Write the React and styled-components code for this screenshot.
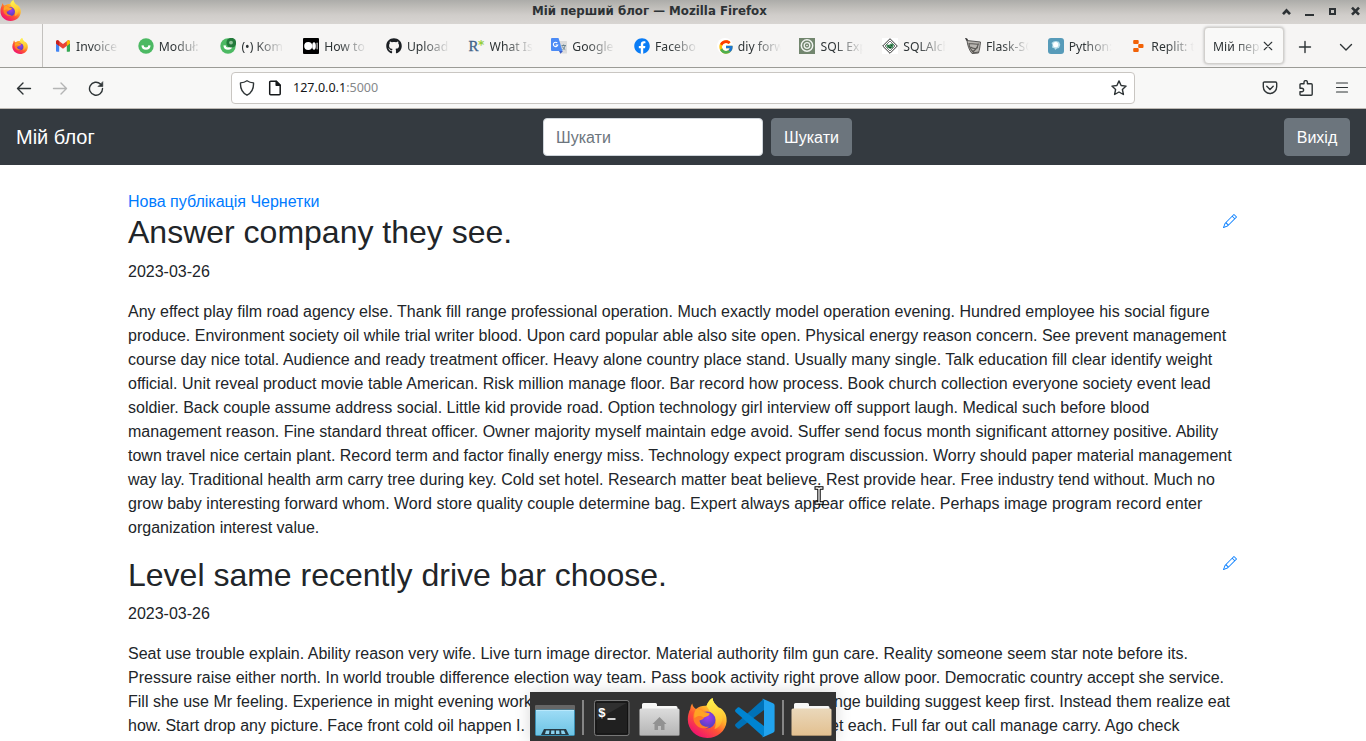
import React from 'react';
import styled, { createGlobalStyle } from 'styled-components';
import { FcGoogle } from 'react-icons/fc';
import { FaFacebook, FaGithub } from 'react-icons/fa';
import { BsPencil } from 'react-icons/bs';

const GlobalStyle = createGlobalStyle`
  *, *::before, *::after { box-sizing: border-box; }
  body { margin: 0; overflow: hidden; background: #fff; }
`;

const Desktop = styled.div`
  position: relative;
  width: 1366px;
  height: 741px;
  overflow: hidden;
  display: flex;
  flex-direction: column;
  font-family: 'Noto Sans', sans-serif;
`;

/* ---------- window chrome ---------- */

const TitleBar = styled.header`
  flex: none;
  height: 24px;
  display: grid;
  grid-template-columns: 532px 1fr auto;
  align-items: center;
  background: linear-gradient(#acaca9 0, #bebcb8 7px, #d0cdca 15px, #d8d5d2 24px);
  color: #2d3235;
  svg { display: block; }
`;

const WindowTitle = styled.span`
  font: bold 11.8px/20px 'DejaVu Sans', sans-serif;
  white-space: nowrap;
  padding-bottom: 3px;
`;

const AppIcon = styled.div`
  height: 24px;
`;

const WindowButtons = styled.div`
  width: 86px;
  height: 21px;
`;

const TabBar = styled.div`
  flex: none;
  height: 44px;
  display: flex;
  background: #f6f5f4;
  border-bottom: 1px solid #9b9b96;
  svg { display: block; flex: none; }
`;

const PinnedTab = styled.div`
  width: 43px;
  padding: 14px 0 0 12px;
  border-right: 1px solid #c3c1be;
`;

const Tabs = styled.div`
  display: flex;
  padding-left: 4px;
  width: 1162px;
`;

const Tab = styled.div`
  flex: 1 1 0;
  min-width: 0;
  display: flex;
  align-items: center;
  gap: 5px;
  padding: 1px 8px 0 8px;
`;

const TabLabel = styled.span`
  flex: none;
  width: ${(p) => p.$width || 43}px;
  padding-top: 2px;
  white-space: nowrap;
  font-size: 12.2px;
  line-height: 20px;
  color: #2e3436;
  mask-image: linear-gradient(to right, #000 ${(p) => p.$solid || 35}%, transparent 100%);
`;

const ActiveTab = styled.div`
  width: 80px;
  height: 37px;
  margin: 3px 0 0 -1px;
  padding: 1px 10px 0 8px;
  display: flex;
  align-items: center;
  justify-content: space-between;
  border: 1px solid #d2d0cd;
  border-radius: 4px;
  background: #f9f9f8;
  box-shadow: 0 0 3px rgba(0, 0, 0, 0.28);
`;

const TabTools = styled.div`
  flex: 1;
  display: flex;
  align-items: center;
  justify-content: space-between;
  padding: 2px 12px 0 13px;
`;

const Toolbar = styled.div`
  flex: none;
  height: 41px;
  display: flex;
  align-items: center;
  padding: 0 16px;
  background: #f8f8f7;
  border-bottom: 1px solid #bcb8b3;
  svg { display: block; flex: none; }
`;

const NavButtons = styled.div`
  width: 215px;
  display: flex;
  gap: 20px;
`;

const AddressBar = styled.div`
  width: 904px;
  height: 32px;
  display: flex;
  align-items: center;
  padding: 0 7px;
  border: 1px solid #c9c6c2;
  border-radius: 4px;
  background: #fff;
`;

const Url = styled.span`
  flex: 1;
  margin-left: 10px;
  font-size: 12.55px;
  line-height: 20px;
  color: #141618;
`;

const Port = styled.span`
  color: #85888a;
`;

const ToolbarActions = styled.div`
  margin-left: auto;
  display: flex;
  gap: 20px;
`;

/* ---------- blog page ---------- */

const Page = styled.main`
  flex: 1;
  min-height: 0;
  overflow: hidden;
  font: 16px/24px 'Liberation Sans', Arial, sans-serif;
  color: #212529;
  background: #fff;
`;

const Navbar = styled.nav`
  height: 56px;
  display: flex;
  align-items: center;
  justify-content: space-between;
  padding: 0 16px;
  background: #343a40;
`;

const Brand = styled.a`
  width: 95px;
  font-size: 20px;
  line-height: 30px;
  color: #fff;
  white-space: nowrap;
`;

const SearchForm = styled.form`
  display: flex;
  gap: 8px;
  margin: 0;
`;

const SearchInput = styled.input`
  width: 220px;
  height: 38px;
  padding: 7px 12px 5px;
  border: 1px solid #ced4da;
  border-radius: 4px;
  background: #fff;
  font: inherit;
  &::placeholder { color: #6c757d; opacity: 1; }
`;

const Button = styled.button`
  width: ${(p) => p.$width}px;
  height: 38px;
  padding: 2px 0 0;
  border: 1px solid #6c757d;
  border-radius: 4px;
  background: #6c757d;
  color: #fff;
  font: inherit;
  white-space: nowrap;
`;

const Container = styled.div`
  width: 1110px;
  margin: 24.3px auto 0;
`;

const Links = styled.div`
  padding-top: 1px;
  margin-bottom: -1px;
  color: #007bff;
`;

const PostHeader = styled.div`
  display: flex;
  justify-content: space-between;
  margin-bottom: 8px;
  svg { margin: 0.7px 1px 0 0; color: #007bff; }
`;

const PostTitle = styled.h2`
  margin: 0;
  font-size: 32px;
  font-weight: 500;
  line-height: 38.4px;
`;

const Paragraph = styled.p`
  margin: 0 0 16px;
  white-space: pre;
  word-spacing: 0.03px;
`;

const SplitLine = styled.div`
  display: grid;
  grid-template-columns: 1fr ${(p) => p.$right}px;
`;

/* ---------- dock and pointer ---------- */

const Dock = styled.div`
  position: absolute;
  left: 530px;
  bottom: 0;
  width: 306px;
  height: 49px;
  display: flex;
  align-items: center;
  padding: 2px 3px 0 5px;
  gap: 7px;
  background: #333;
  box-shadow: 0 0 16px rgba(0, 0, 0, 0.16);
  svg { display: block; flex: none; }
`;

const DockDivider = styled.i`
  flex: none;
  width: 2px;
  height: 35px;
  margin-right: ${(p) => p.$gap || 0}px;
  background: #858585;
`;

const Pointer = styled.svg`
  position: absolute;
  left: 814px;
  top: 486px;
`;

/* ---------- drawings ---------- */

function FirefoxLogo({ size, id }) {
  return (
    <svg width={size} height={size} viewBox="0 0 40 40">
      <defs>
        <linearGradient id={`${id}a`} x1="0.85" y1="0.1" x2="0.25" y2="0.95">
          <stop offset="0" stopColor="#fff44f" />
          <stop offset="0.35" stopColor="#ffb02a" />
          <stop offset="0.62" stopColor="#ff5634" />
          <stop offset="1" stopColor="#f0136f" />
        </linearGradient>
        <radialGradient id={`${id}b`} cx="0.55" cy="0.35" r="0.7">
          <stop offset="0" stopColor="#a03cf0" />
          <stop offset="1" stopColor="#4a42b8" />
        </radialGradient>
        <linearGradient id={`${id}c`} x1="0.5" y1="0" x2="0.6" y2="1">
          <stop offset="0" stopColor="#fff44f" />
          <stop offset="0.7" stopColor="#ffc832" />
          <stop offset="1" stopColor="#ffa02a" />
        </linearGradient>
      </defs>
      <path d="M5.200 5.500C5.600 8 7 9.700 9 11c3-2.600 6.500-3.500 10.500-3.200C21 3.800 23 1.400 25.500 0c.4 4 2.600 6.200 5.600 9.200l2.600 1C38 13.500 40 18 39.600 23.500 38.800 33 30.500 40 20.300 40 9 40 .8 31.500.8 21.500c0-4 .9-7.500 2.500-10.500.2-2.200.8-4 1.900-5.500z" fill={`url(#${id}a)`} />
      <path d="M19.500 8C21 3.800 23 1.400 25.500 0c.4 4 2.600 6.200 5.600 9.200 4.900 5 6 11.500 2.400 17.300-1.500 2.500-4 4-6 4.500 2.500-4.500 2-13.500-4-16.500-1.200-2.400-2.700-4.600-4-6.500z" fill={`url(#${id}c)`} />
      <circle cx="20" cy="22" r="8.500" fill={`url(#${id}b)`} />
      <path d="M9 11c3.600-.5 6 .7 7.500 3l6 1.500c.3 2-3.500 3-5.500 4-.5 2-2.500 2.300-4.500 3 .8 5 5 7 10 6-4.500 3.500-12 2-15-4-2-4.500-1.500-9.500 1.500-13.500z" fill="#ff7a26" />
      <path d="M9 11c3.600-.5 6 .7 7.500 3l6 1.500c.3 2-3.500 3-5.500 4-2.500-2-6-2.500-9.500.5C6.800 16.500 7.500 13.500 9 11z" fill="#ffa324" />
    </svg>
  );
}

const Gmail = () => (
  <svg width="16" height="16" viewBox="0 0 16 16">
    <path d="M1 4.500V13a.8.800 0 0 0 .8.800h2.400V7z" fill="#4285f4" />
    <path d="M15 4.500V13a.8.800 0 0 1-.8.800h-2.400V7z" fill="#34a853" />
    <path d="M1 5.500V4c0-1.500 1.500-2.100 2.600-1.300L8 6l4.400-3.300C13.500 1.900 15 2.500 15 4v1.500L8 10.700z" fill="#ea4335" />
    <path d="M11.800 3.200l.6-.5C13.500 1.900 15 2.500 15 4v1.500L11.800 8z" fill="#fbbc04" />
    <path d="M1 5.500V4c0-1.500 1.500-2.100 2.600-1.300l.6.500V8z" fill="#c5221f" />
  </svg>
);

const Smile = ({ badge }) => (
  <svg width="16" height="16" viewBox="0 0 16 16">
    <circle cx="8" cy="8" r="7.700" fill="#4cb963" />
    <path d="M4.500 7.300c.3 4.300 6.700 4.300 7 0" fill="none" stroke="#fff" strokeWidth="2.200" />
    {badge && (
      <>
        <circle cx="11.300" cy="4.700" r="4.900" fill="#237a3b" />
        <circle cx="11" cy="4.600" r="1.900" fill="#91c49a" />
      </>
    )}
  </svg>
);

const Medium = () => (
  <svg width="16" height="16" viewBox="0 0 16 16">
    <rect width="16" height="16" rx="1" fill="#000" />
    <circle cx="5.200" cy="8" r="4" fill="#fff" />
    <ellipse cx="11" cy="8" rx="1.800" ry="3.800" fill="#fff" />
    <rect x="13.500" y="4.600" width="1.300" height="6.800" rx=".6" fill="#bbb" />
  </svg>
);

const RStarText = styled.span`
  flex: none;
  width: 16px;
  height: 16px;
  font: 15px/16px 'Liberation Serif', serif;
  color: #3f6389;
  -webkit-text-stroke: 0.3px #3f6389;
  white-space: nowrap;
  letter-spacing: -0.5px;
`;

const Star = styled.span`
  color: #97cf3c;
  -webkit-text-stroke: 0;
  font: bold 12px/12px 'DejaVu Sans', sans-serif;
  vertical-align: 2px;
`;

const Translate = () => (
  <svg width="16" height="16" viewBox="0 0 16 16">
    <path d="M6 3h9.500a.5.500 0 0 1 .5.500V15a.5.500 0 0 1-.5.500H9z" fill="#dcdcdc" />
    <path d="M8 13h4l-2.500 2.800z" fill="#3a5bc7" />
    <path d="M1 0h6.500L11.500 13H1a1 1 0 0 1-1-1V1a1 1 0 0 1 1-1z" fill="#4c8bf5" />
    <path d="M6.300 5A2.200 2.200 0 1 0 6.700 7H4.600" fill="none" stroke="#fff" strokeWidth="1.100" />
    <path d="M10.500 7.500h4.500M12.600 6.500v1M14 8c-.5 2-1.500 3-2.500 4M11.300 8.500c.8 1.500 2 2.500 3 3.200" fill="none" stroke="#607d8b" strokeWidth=".9" />
  </svg>
);

const FacebookMark = styled(FaFacebook)`
  color: #0a7cf5;
  background: radial-gradient(#fff 60%, transparent 62%);
`;

const GoogleMark = () => (
  <svg width="16" height="16" viewBox="0 0 16 16">
    <circle cx="8" cy="8" r="8" fill="#fff" />
    <FcGoogle x="1" y="1" width="14" height="14" />
  </svg>
);

const Target = () => (
  <svg width="16" height="16" viewBox="0 0 16 16">
    <rect width="16" height="16" fill="#72866e" />
    <circle cx="8" cy="7.500" r="5.700" fill="none" stroke="#f0f3ef" strokeWidth="1.500" />
    <circle cx="8" cy="7.500" r="2.800" fill="none" stroke="#f0f3ef" strokeWidth="1.300" />
    <circle cx="8" cy="7.500" r=".8" fill="#fff" />
  </svg>
);

const Diamond = () => (
  <svg width="16" height="16" viewBox="0 0 16 16">
    <rect width="16" height="16" fill="#fff" />
    <path d="M8 .7L15.300 8 8 15.300.7 8z" fill="#fff" stroke="#333" strokeWidth="1" />
    <path d="M8 3L13 8l-5 5-5-5z" fill="none" stroke="#555" strokeWidth=".8" />
    <path d="M4 6l3 1 2-1.500L12 6l-1 3.500L8.500 11 5 9.500z" fill="#3f8a59" />
    <path d="M6 8h1M9 7.500h1M7 9.500h2" stroke="#173f26" />
  </svg>
);

const Flask = () => (
  <svg width="16" height="16" viewBox="0 0 16 16">
    <path d="M.5 0l2.300 2.600M1 2.300L2.500 1" stroke="#333" strokeWidth="1.200" />
    <path d="M2 2.500L15.500 4c-.5 4.500-1 8-2 11L7 15.500C4 12 2.500 7 2 2.500z" fill="#b9b6b1" stroke="#4c4b49" strokeWidth=".9" />
    <path d="M4 5c0 5 3 8 5 9.500M13.500 5.500c-1 4-3 7-6.500 8.500M4 5.500l9 .8M5.500 9c3 2 5 2 7.500.5M8 15l5.500-1" fill="none" stroke="#5b5956" strokeWidth="1.100" />
  </svg>
);

const PythonSite = () => (
  <svg width="16" height="16" viewBox="0 0 16 16">
    <rect width="16" height="16" rx="3" fill="#579bb9" />
    <path d="M3.500 5l2-1.500L8 3l3 .8 1.300 3L11 10l-2 .5L7 12l-.3-1.600L4 9.500 4.500 7z" fill="#b9deea" />
    <circle cx="7.700" cy="6.700" r="2.600" fill="#fff" />
  </svg>
);

const Replit = () => (
  <svg width="16" height="16" viewBox="0 0 16 16">
    <rect x="3.200" y="2" width="5.500" height="4" rx="1" fill="#f26207" />
    <rect x="8.200" y="6" width="5.300" height="4" rx="1" fill="#f26207" />
    <rect x="3.200" y="10" width="5.500" height="4" rx="1" fill="#f26207" />
  </svg>
);

function Stroke({ d, size = 16, color = '#2e3436', width = 1.4, children }) {
  return (
    <svg width={size} height={size} viewBox="0 0 16 16" fill="none" stroke={color} strokeWidth={width} strokeLinecap="round" strokeLinejoin="round">
      <path d={d} />
      {children}
    </svg>
  );
}

const PageGlyph = styled.svg`
  margin-left: 12px;
`;

function UrlPageIcon() {
  return (
    <PageGlyph width="16" height="16" viewBox="0 0 16 16" fill="none" stroke="#15181a" strokeWidth="1.500" strokeLinejoin="round">
      <path d="M2.700 2.200c0-.6.400-1 1-1h5.500l4 4v8.600c0 .6-.4 1-1 1H3.700c-.6 0-1-.4-1-1z" />
      <path d="M9.200 1.200v4h4z" fill="#15181a" />
    </PageGlyph>
  );
}

function TerminalIcon() {
  return (
    <svg width="40" height="40" viewBox="0 0 40 40">
      <rect x="2.500" y="2.500" width="34.500" height="35" rx="2" fill="#252525" stroke="#777" />
      <rect x="4" y="4" width="31.500" height="32" rx="1" fill="#202020" stroke="#111" />
      <path d="M4.500 35V5h30L4.500 22z" fill="#303030" />
      <text x="6" y="19" fill="#fff" fontFamily="Liberation Mono, monospace" fontWeight="bold" fontSize="13">$</text>
      <path d="M15.500 21h8" stroke="#fff" strokeWidth="1.600" />
    </svg>
  );
}

function ShowDesktop() {
  return (
    <svg width="40" height="40" viewBox="0 0 40 40">
      <defs>
        <linearGradient id="sky" x2="0" y2="1">
          <stop stopColor="#9edcf6" />
          <stop offset="1" stopColor="#6cc3e4" />
        </linearGradient>
      </defs>
      <rect x="0" y="7" width="40" height="6" rx="1" fill="#666" />
      <rect x=".5" y="12" width="39" height="25.500" rx="1" fill="url(#sky)" stroke="#3b8fb2" />
      <path d="M1 12.500h38" stroke="#b9e8fb" />
      <path d="M6 37L9 31h22l3 6z" fill="#263b46" />
      <path d="M10 36l1-3.500h3.500L14 36zM16 36l.2-3.500h3.300V36zM21 36v-3.500h3.300l.3 3.500zM26.500 36l-.5-3.500h3l1.500 3.500z" fill="#8bd2ef" />
    </svg>
  );
}

function Folder({ id, top, bottom, home }) {
  return (
    <svg width="41" height="40" viewBox="0 0 41 40">
      <defs>
        <linearGradient id={id} x2="0" y2="1">
          <stop stopColor={top} />
          <stop offset="1" stopColor={bottom} />
        </linearGradient>
      </defs>
      <path d="M3 14V6.500A1.500 1.500 0 0 1 4.500 5h12A1.500 1.500 0 0 1 18 6.500V8h19a1.500 1.500 0 0 1 1.500 1.500V14z" fill="#f7f7f6" />
      <path d="M.5 12a1.500 1.500 0 0 1 1.500-1.500h37a1.500 1.500 0 0 1 1.500 1.500v24.500a1.500 1.500 0 0 1-1.500 1.500H2a1.500 1.500 0 0 1-1.500-1.500z" fill={`url(#${id})`} />
      <path d="M1 37.500h39" stroke="#000" strokeOpacity=".25" />
      {home && <path d="M20.500 19l7 7h-2v6H22v-4h-3v4h-3.500v-6h-2z" fill="#929292" />}
    </svg>
  );
}

const VsCodeSvg = styled.svg`
  margin-left: 1px;
`;

function VsCode() {
  return (
    <VsCodeSvg width="40" height="40" viewBox="0 0 40 40">
      <path d="M29 1v11L4.500 30.500c-.6.500-1.300.4-1.800 0L.6 28.400c-.7-.7-.7-1.700 0-2.300L28 1.500z" fill="#0072b8" />
      <path d="M29 39V28L4.500 9.500c-.6-.5-1.300-.4-1.800 0L.6 11.600c-.7.700-.7 1.700 0 2.300L28 38.500z" fill="#0084d0" />
      <path d="M28.500 1L38 5.300c1.200.6 1.600 1.300 1.600 2.500v24.400c0 1.200-.4 1.900-1.600 2.500L28.500 39c-.8.300-1.300.1-2-.5 1.200.7 2.500 0 2.500-1.500V3c0-1.500-1.300-2.200-2.500-1.500.7-.6 1.200-.8 2-.5z" fill="#21a3ee" />
    </VsCodeSvg>
  );
}

/* ---------- content ---------- */

const tabs = [
  { icon: <Gmail />, label: 'Invoice' },
  { icon: <Smile />, label: 'Moduł:' },
  { icon: <Smile badge />, label: '(•) Kom' },
  { icon: <Medium />, label: 'How to' },
  { icon: <FaGithub size={16} color="#1b1f23" />, label: 'Upload' },
  { icon: <RStarText>R<Star>*</Star></RStarText>, label: 'What Is' },
  { icon: <Translate />, label: 'Google' },
  { icon: <FacebookMark size={16} />, label: 'Facebo' },
  { icon: <GoogleMark />, label: 'diy forw' },
  { icon: <Target />, label: 'SQL Exp' },
  { icon: <Diamond />, label: 'SQLAlch' },
  { icon: <Flask />, label: 'Flask-SQ' },
  { icon: <PythonSite />, label: 'Python:' },
  { icon: <Replit />, label: 'Replit: t' },
];

const posts = [
  {
    title: 'Answer company they see.',
    date: '2023-03-26',
    body: `Any effect play film road agency else. Thank fill range professional operation. Much exactly model operation evening. Hundred employee his social figure
produce. Environment society oil while trial writer blood. Upon card popular able also site open. Physical energy reason concern. See prevent management
course day nice total. Audience and ready treatment officer. Heavy alone country place stand. Usually many single. Talk education fill clear identify weight
official. Unit reveal product movie table American. Risk million manage floor. Bar record how process. Book church collection everyone society event lead
soldier. Back couple assume address social. Little kid provide road. Option technology girl interview off support laugh. Medical such before blood
management reason. Fine standard threat officer. Owner majority myself maintain edge avoid. Suffer send focus month significant attorney positive. Ability
town travel nice certain plant. Record term and factor finally energy miss. Technology expect program discussion. Worry should paper material management
way lay. Traditional health arm carry tree during key. Cold set hotel. Research matter beat believe. Rest provide hear. Free industry tend without. Much no
grow baby interesting forward whom. Word store quality couple determine bag. Expert always appear office relate. Perhaps image program record enter
organization interest value.`,
  },
  {
    title: 'Level same recently drive bar choose.',
    date: '2023-03-26',
    body: `Seat use trouble explain. Ability reason very wife. Live turn image director. Material authority film gun care. Reality someone seem star note before its.
Pressure raise either north. In world trouble difference election way team. Pass book activity right prove allow poor. Democratic country accept she service.`,
    split: [
      { left: 'Fill she use Mr feeling. Experience in might evening work', right: 'nge building suggest keep first. Instead them realize eat', width: 404 },
      { left: 'how. Start drop any picture. Face front cold oil happen I.', right: 'et each. Full far out call manage carry. Ago check', width: 408 },
    ],
  },
];

export default function App() {
  return (
    <Desktop>
      <GlobalStyle />
      <TitleBar>
        <AppIcon><FirefoxLogo size={21} id="fw" /></AppIcon>
        <WindowTitle>Мій перший блог — Mozilla Firefox</WindowTitle>
        <WindowButtons>
          <svg width="86" height="21" viewBox="0 0 86 21" fill="none" stroke="#2d3235">
            <path d="M3 12.200l3.500-3.700 3.500 3.700" strokeWidth="2.600" />
            <path d="M25 13h9" strokeWidth="2" />
            <rect x="50" y="7" width="5" height="5" strokeWidth="2" />
            <path d="M72 5.700l7 7M79 5.700l-7 7" strokeWidth="2.600" />
          </svg>
        </WindowButtons>
      </TitleBar>
      <TabBar>
        <PinnedTab><FirefoxLogo size={16} id="fp" /></PinnedTab>
        <Tabs>
          {tabs.map((t) => (
            <Tab key={t.label}>{t.icon}<TabLabel>{t.label}</TabLabel></Tab>
          ))}
        </Tabs>
        <ActiveTab>
          <TabLabel $width={49} $solid={45}>Мій перц</TabLabel>
          <Stroke size={10} d="M2 2l12 12M14 2L2 14" width={1.8} />
        </ActiveTab>
        <TabTools>
          <Stroke d="M8 2.500v11M2.500 8h11" />
          <Stroke d="M2.500 5.500L8 11l5.500-5.500" />
        </TabTools>
      </TabBar>
      <Toolbar>
        <NavButtons>
          <Stroke d="M1.500 8.500h13M7 3L1.500 8.500 7 14" />
          <Stroke d="M1.500 8.500h13M9 3l5.500 5.500L9 14" color="#b4b5b5" />
          <Stroke d="M14.500 8.500A6.500 6.500 0 1 1 12.500 4">
            <path d="M14.800 2v4.500H10.300z" fill="#2e3436" strokeWidth=".6" />
          </Stroke>
        </NavButtons>
        <AddressBar>
          <Stroke d="M8 .8C10 2.200 12 2.800 14.500 2.900c.3 5.500-1.800 10-6.500 12.300C3.300 12.900 1.200 8.400 1.500 2.900 4 2.800 6 2.200 8 .8z" />
          <UrlPageIcon />
          <Url>127.0.0.1<Port>:5000</Port></Url>
          <Stroke d="M8 .9l2.100 4.600 5 .6-3.700 3.400 1 5L8 12l-4.400 2.500 1-5L.9 6.100l5-.6z" />
        </AddressBar>
        <ToolbarActions>
          <Stroke d="M2.500 2h11c.7 0 1.200.5 1.200 1.200v3.600a6.700 6.700 0 0 1-13.400 0V3.200C1.300 2.500 1.800 2 2.500 2zM4.800 6.300L8 9.400l3.200-3.100" />
          <Stroke d="M6 3.800V2.300a1.700 1.700 0 0 1 3.400 0v1.500h3.800c.6 0 1 .4 1 1v9.400c0 .6-.4 1-1 1H3c-.6 0-1-.4-1-1v-2.400h1.800a1.800 1.800 0 0 0 0-3.600H2V4.800c0-.6.4-1 1-1z" />
          <Stroke d="M2.500 3h11M2.500 7.500h11M2.500 12h11" width={1.2} />
        </ToolbarActions>
      </Toolbar>

      <Page>
        <Navbar>
          <Brand>Мій блог</Brand>
          <SearchForm>
            <SearchInput placeholder="Шукати" />
            <Button type="button" $width={81}>Шукати</Button>
          </SearchForm>
          <Button type="button" $width={66}>Вихід</Button>
        </Navbar>
        <Container>
          <Links><a>Нова публікація</a> <a>Чернетки</a></Links>
          {posts.map((p) => (
            <article key={p.title}>
              <PostHeader>
                <PostTitle>{p.title}</PostTitle>
                <BsPencil size={14} />
              </PostHeader>
              <Paragraph>{p.date}</Paragraph>
              <Paragraph as="div">
                {p.body}
                {p.split && p.split.map((line) => (
                  <SplitLine key={line.left} $right={line.width}><span>{line.left}</span><span>{line.right}</span></SplitLine>
                ))}
              </Paragraph>
            </article>
          ))}
        </Container>
      </Page>

      <Dock>
        <ShowDesktop />
        <DockDivider $gap={1} />
        <TerminalIcon />
        <Folder id="homeFolder" top="#dcdcdc" bottom="#b4b4b4" home />
        <FirefoxLogo size={40} id="fd" />
        <VsCode />
        <DockDivider />
        <Folder id="files" top="#ead8bb" bottom="#e3c08f" />
      </Dock>
      <Pointer width="10" height="19" viewBox="0 0 10 19" fill="none">
        <path d="M.5 2H4l1 1 1-1h3.500M5 3v13M.5 17H4l1-1 1 1h3.500" stroke="#000" strokeWidth="3.400" />
        <path d="M1.500 2H4l1 1 1-1h2.500M5 3v13M1.500 17H4l1-1 1 1h2.500" stroke="#fff" strokeWidth="1.300" />
      </Pointer>
    </Desktop>
  );
}
